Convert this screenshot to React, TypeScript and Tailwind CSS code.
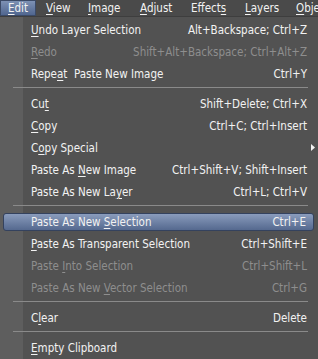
import React from 'react';

type Item =
  | { kind: 'sep' }
  | { kind: 'item'; label: string; shortcut?: string; disabled?: boolean; active?: boolean; submenu?: boolean };

const items: Item[] = [
  { kind: 'item', label: '&Undo Layer Selection', shortcut: 'Alt+Backspace; Ctrl+Z' },
  { kind: 'item', label: '&Redo', shortcut: 'Shift+Alt+Backspace; Ctrl+Alt+Z', disabled: true },
  { kind: 'item', label: 'Repe&at  Paste New Image', shortcut: 'Ctrl+Y' },
  { kind: 'sep' },
  { kind: 'item', label: 'Cu&t', shortcut: 'Shift+Delete; Ctrl+X' },
  { kind: 'item', label: '&Copy', shortcut: 'Ctrl+C; Ctrl+Insert' },
  { kind: 'item', label: 'C&opy Special', submenu: true },
  { kind: 'item', label: 'Paste As &New Image', shortcut: 'Ctrl+Shift+V; Shift+Insert' },
  { kind: 'item', label: 'Paste As New La&yer', shortcut: 'Ctrl+L; Ctrl+V' },
  { kind: 'sep' },
  { kind: 'item', label: 'Paste As New &Selection', shortcut: 'Ctrl+E', active: true },
  { kind: 'item', label: '&Paste As Transparent Selection', shortcut: 'Ctrl+Shift+E' },
  { kind: 'item', label: 'Paste &Into Selection', shortcut: 'Ctrl+Shift+L', disabled: true },
  { kind: 'item', label: 'Paste As New &Vector Selection', shortcut: 'Ctrl+G', disabled: true },
  { kind: 'sep' },
  { kind: 'item', label: 'C&lear', shortcut: 'Delete' },
  { kind: 'sep' },
  { kind: 'item', label: '&Empty Clipboard' },
];

const menus = [
  { label: '&Edit', w: 'w-[36px] pl-[8px]' },
  { label: '&View', w: 'w-[42px] pl-[10px]' },
  { label: '&Image', w: 'w-[52px] pl-[10px]' },
  { label: '&Adjust', w: 'w-[51px] pl-[10px]' },
  { label: 'Effect&s', w: 'w-[54px] pl-[10px]' },
  { label: '&Layers', w: 'w-[51px] pl-[10px]' },
  { label: '&Objects', w: 'w-[60px] pl-[10px]' },
];

// "&x" marks the mnemonic letter
const Label = ({ text }: { text: string }) => {
  const i = text.indexOf('&');
  if (i < 0) return <span className="whitespace-pre">{text}</span>;
  return (
    <span className="whitespace-pre">
      {text.slice(0, i)}
      <span className="underline decoration-1 underline-offset-[2px]">{text[i + 1]}</span>
      {text.slice(i + 2)}
    </span>
  );
};

export default function App() {
  return (
    <div
      className="w-[318px] h-[359px] overflow-hidden bg-[#525252] text-[11.5px] text-[#f2f2f2] leading-none"
      style={{ fontFamily: "Tahoma, 'DejaVu Sans Condensed', 'Liberation Sans', sans-serif" }}
    >
      <div className="h-[17px] flex overflow-hidden bg-[#4a4a4a] border-b border-[#3e3e3e] whitespace-nowrap">
        {menus.map((m, i) => (
          <div
            key={m.label}
            className={`${m.w} shrink-0 h-[16px] flex items-center pt-px ${
              i === 0 ? 'bg-gradient-to-b from-[#7d91b4] to-[#50668f] border border-[#3b4a66]' : ''
            }`}
          >
            <span className={i === 0 ? '-ml-px' : ''}>
              <Label text={m.label} />
            </span>
          </div>
        ))}
      </div>

      <div className="pt-px bg-[linear-gradient(to_right,#5e5e5e_23px,#525252_23px)] h-full">
        {items.map((it, idx) => {
          if (it.kind === 'sep') {
            return (
              <div key={idx} className="h-[8px] pt-[3px]">
                <div className="ml-[13px] w-[295px] h-px bg-[#8a8a8a]" />
              </div>
            );
          }
          const color = it.disabled ? 'text-[#8e8e8e]' : 'text-[#f2f2f2]';
          if (it.active) {
            return (
              <div key={idx} className="h-[22px] pt-[3px] pl-[3px]">
                <div className="w-[311px] h-[18px] rounded-[3px] border border-[#34425e] bg-gradient-to-b from-[#8a9cbc] to-[#55698f] flex items-center justify-between pt-[2px] pl-[27px] pr-[7px]">
                  <Label text={it.label} />
                  <span>{it.shortcut}</span>
                </div>
              </div>
            );
          }
          return (
            <div key={idx} className={`h-[22px] flex items-center justify-between pt-[3px] pl-[31px] pr-[11px] ${color}`}>
              <Label text={it.label} />
              {it.submenu ? (
                <svg width="5" height="7" viewBox="0 0 5 7" className="-mr-[9px] -mt-[2px]">
                  <path d="M0 0 L4 3.5 L0 7 Z" fill="#f2f2f2" />
                </svg>
              ) : (
                <span className="whitespace-pre">{it.shortcut}</span>
              )}
            </div>
          );
        })}
      </div>
    </div>
  );
}
